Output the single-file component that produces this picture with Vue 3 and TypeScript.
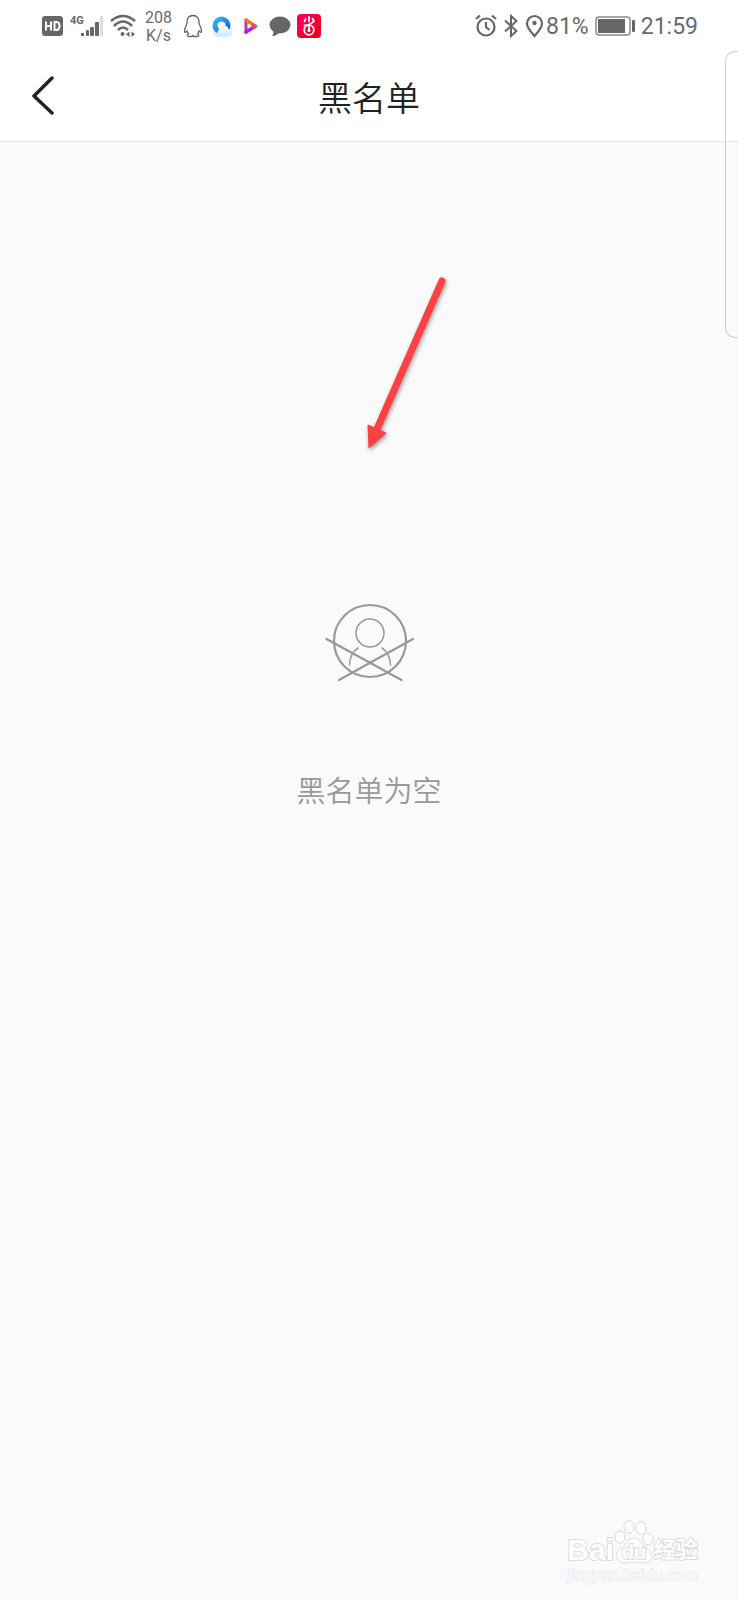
<script setup lang="ts">
import { ref } from 'vue'

const title = ref('黑名单')
const emptyText = ref('黑名单为空')
const battery = ref(81)
const time = ref('21:59')
</script>

<template>
  <div class="screen">
    <div class="status">
      <div class="group">
        <svg width="22" height="22" viewBox="0 0 22 22">
          <rect x="0" y="1" width="21" height="20" rx="3" fill="#666" />
          <path d="M4 6.500V15.500M9 6.500V15.500M4 11H9M12.500 7V15H14C16.500 15 17.500 13.500 17.500 11S16.500 7 14 7Z" fill="none" stroke="#fff" stroke-width="2" />
        </svg>
        <div class="signal">
          <span class="net">4G</span>
          <svg width="23" height="22" viewBox="0 0 23 22">
            <g fill="#666">
              <rect x="0" y="18" width="3" height="3" />
              <rect x="5" y="15" width="3" height="6" rx="1" />
              <rect x="9" y="12" width="4" height="9" rx="1" />
              <rect x="14" y="7" width="4" height="14" rx="1" />
            </g>
            <rect x="19" y="1" width="3" height="20" rx="1" fill="#ddd" />
          </svg>
        </div>
        <svg width="26" height="24" viewBox="0 0 26 24">
          <g fill="none" stroke="#666" stroke-width="2.500">
            <path d="M1 7Q13-3 25 7" />
            <path d="M4 12Q13 3 22 12" />
            <path d="M8 16Q13 11 18 16" />
          </g>
          <circle cx="12.500" cy="20" r="2" fill="#666" />
          <path d="M19.500 17.500V23L16 20.200ZM21.500 17.500V23L25 20.200Z" fill="#666" />
        </svg>
        <div class="speed"><span>208</span><span>K/s</span></div>
        <svg width="24" height="24" viewBox="0 0 24 24">
          <path d="M12 1.500C7.500 1.500 6 5 6 8.500C6 11 3.500 13.500 3.500 17C3.500 19 4.500 18.500 6 17C6 18.500 7 19.500 7.500 20C5.500 21 6 22.500 8 22.500H11L12 21.500L13 22.500H16C18 22.500 18.500 21 16.500 20C17 19.500 18 18.500 18 17C19.500 18.500 20.500 19 20.500 17C20.500 13.500 18 11 18 8.500C18 5 16.500 1.500 12 1.500Z" fill="none" stroke="#666" stroke-width="1.300" />
        </svg>
        <svg width="22" height="24" viewBox="1 0 22 24">
          <defs>
            <linearGradient id="sky" x1="0" y1="0" x2="1" y2="1">
              <stop offset="0" stop-color="#35b5f5" />
              <stop offset="1" stop-color="#1463dc" />
            </linearGradient>
            <linearGradient id="cloud" x1="0" y1="0" x2="0" y2="1">
              <stop offset="0" stop-color="#fff" />
              <stop offset="1" stop-color="#d3e9fa" />
            </linearGradient>
          </defs>
          <rect x="2" y="9" width="21" height="14" rx="7" fill="url(#cloud)" />
          <circle cx="11.500" cy="11.500" r="6.500" fill="none" stroke="url(#sky)" stroke-width="5" />
          <path d="M7 22C7 17 9 14 12 14.500C13 11 18 11 18.500 15C22 15 23 19 21 22Z" fill="url(#cloud)" />
        </svg>
        <svg width="24" height="24" viewBox="0 0 24 24">
          <path d="M7 6V18" stroke="#d522c8" stroke-width="3" stroke-linecap="round" />
          <path d="M7 6L16 12" stroke="#f57825" stroke-width="3.500" stroke-linecap="round" />
          <path d="M7 18L16 12.500" stroke="#9e22e0" stroke-width="3.500" stroke-linecap="round" />
          <path d="M13 10.500L16 12L13 14" fill="none" stroke="#f04468" stroke-width="3" />
          <path d="M8.500 10.500L11 12L8.500 13.500Z" fill="#fff" />
        </svg>
        <svg width="22" height="22" viewBox="0 0 22 22">
          <ellipse cx="11" cy="10" rx="10.500" ry="8.500" fill="#666" />
          <path d="M4 15C5 18 4 20 3 21C7 21 9 19 11 17Z" fill="#666" />
        </svg>
        <svg width="24" height="24" viewBox="0 0 24 24">
          <defs>
            <linearGradient id="rose" x1="0" y1="0" x2="1" y2="1">
              <stop offset="0" stop-color="#f90066" />
              <stop offset="1" stop-color="#e80010" />
            </linearGradient>
          </defs>
          <rect width="24" height="24" rx="4" fill="url(#rose)" />
          <g fill="none" stroke="#fff" stroke-width="1.800" stroke-linecap="round">
            <path d="M12 3V7M8.500 5L7.500 7.500M15.500 4.500L17 7M16.500 7.500C14 10.500 11 11 7.500 11.500" />
            <circle cx="12" cy="16" r="4.800" />
            <path d="M12 13V17" />
          </g>
          <circle cx="12" cy="16.500" r="1.500" fill="#fff" />
        </svg>
      </div>
      <div class="group">
        <svg width="22" height="24" viewBox="0 0 22 24" fill="none" stroke="#666" stroke-width="2.200">
          <circle cx="11" cy="13" r="8.500" />
          <path d="M11 8V13L14.500 16M1 5L5 1.500M21 5L17 1.500" />
        </svg>
        <svg width="16" height="24" viewBox="0 0 16 24">
          <path d="M2 6.500L13.500 17L8 22V2L13.500 7L2 17.500" fill="none" stroke="#666" stroke-width="2" />
        </svg>
        <div class="percent">
          <svg width="19" height="24" viewBox="0 0 19 24">
            <path d="M9.500 22C6 18 2 14 2 9.500A7.500 7.500 0 0 1 17 9.500C17 14 13 18 9.500 22Z" fill="none" stroke="#666" stroke-width="2.200" />
            <circle cx="9.500" cy="9" r="2.200" fill="#666" />
          </svg>
          <span class="figure">{{ battery }}%</span>
        </div>
        <svg width="40" height="22" viewBox="0 0 40 22">
          <rect x="1" y="2" width="34" height="18" rx="3" fill="#fff" stroke="#8a8a8a" stroke-width="1.500" />
          <rect x="3" y="4" width="27" height="14" fill="#666" />
          <rect x="37" y="5" width="3" height="12" rx="1" fill="#666" />
        </svg>
        <span class="figure">{{ time }}</span>
      </div>
    </div>

    <header class="header">
      <button class="back" type="button" aria-label="返回">
        <svg width="24" height="40" viewBox="0 0 24 40">
          <path d="M20 2L2 20L20 37" fill="none" stroke="#222" stroke-width="3.500" stroke-linecap="round" stroke-linejoin="round" />
        </svg>
      </button>
      <h1>{{ title }}</h1>
    </header>

    <main class="empty">
      <svg width="90" height="80" viewBox="-1 -1 90 80" fill="none" stroke="#999" stroke-linecap="round">
        <circle cx="45" cy="38" r="36" stroke-width="2.200" />
        <circle cx="45" cy="30" r="14" stroke-width="1.500" />
        <path d="M33 45Q25 50 24.500 62M57 45Q65 50 65.500 62" stroke-width="1.500" />
        <path d="M1.500 36L76.500 77M88 36L14 77" stroke-width="2.200" />
      </svg>
      <p>{{ emptyText }}</p>
    </main>

    <div class="edge"></div>

    <svg class="arrow" width="90" height="184" viewBox="0 0 90 184">
      <path d="M79 9L14 157" stroke="#fb4144" stroke-width="7" stroke-linecap="round" />
      <path d="M5 153L23 161L6 176Z" fill="#fb4144" stroke="#fb4144" stroke-linejoin="round" />
    </svg>

    <div class="mark">
      <div class="brand">
        <span>Bai</span>
        <span class="paw">
          <svg width="40" height="44" viewBox="0 0 40 44" fill="#fff" stroke="#d8d8d8">
            <ellipse cx="6" cy="17" rx="5" ry="6" />
            <ellipse cx="15" cy="7" rx="5" ry="6.500" />
            <ellipse cx="27" cy="8" rx="5" ry="6.500" />
            <ellipse cx="34" cy="19" rx="5" ry="6" />
            <path d="M20 18C14 18 13 24 8 28C0 32 0 42 10 43C15 43 16 42 20 42S27 43 31 43C41 41 39 32 32 28C27 24 26 18 20 18Z" />
          </svg>
          <b>du</b>
        </span>
        <span class="cn">经验</span>
      </div>
      <div class="site">jingyan.baidu.com</div>
    </div>
  </div>
</template>

<style>
body {
  margin: 0;
}
</style>

<style scoped>
.screen {
  position: relative;
  min-height: 100vh;
  background: #fafafa;
  font-family: Roboto, "Noto Sans CJK SC", sans-serif;
  overflow: hidden;
}
.status {
  display: flex;
  justify-content: space-between;
  align-items: center;
  height: 52px;
  padding: 0 40px 0 42px;
  background: #fff;
  color: #6a6a6a;
  font-size: 23px;
  line-height: 28px;
}
.group,
.percent,
.signal {
  display: flex;
  align-items: center;
}
.group {
  gap: 6px;
}
.percent {
  gap: 2px;
}
.figure {
  padding-top: 2px;
}
svg {
  display: block;
  flex: none;
}
.net {
  width: 11px;
  align-self: flex-start;
  font: bold 11px/11px Roboto, sans-serif;
}
.speed {
  display: flex;
  flex-direction: column;
  align-items: center;
  width: 33px;
  padding-top: 1px;
  font-size: 16px;
  line-height: 18px;
}
.header {
  display: flex;
  align-items: center;
  justify-content: center;
  position: relative;
  height: 89px;
  background: #fff;
  border-bottom: 1px solid #e2e2e2;
}
.back {
  position: absolute;
  left: 20px;
  top: 14px;
  padding: 10px 12px;
  border: 0;
  background: none;
}
h1 {
  margin: 0;
  color: #222;
  font-family: "Noto Sans CJK SC", sans-serif;
  font-size: 34px;
  line-height: 50px;
  font-weight: 350;
}
.empty {
  display: flex;
  flex-direction: column;
  align-items: center;
  gap: 86px;
  padding-top: 460px;
}
.empty p {
  margin: 0;
  color: #999;
  font-family: "Noto Sans CJK SC", sans-serif;
  font-size: 29px;
  line-height: 42px;
  font-weight: 350;
}
.edge {
  position: absolute;
  top: 51px;
  right: -1px;
  width: 13px;
  height: 285px;
  border: 1px solid #ccc;
  border-right: 0;
  border-radius: 10px 0 0 10px;
}
.arrow {
  position: absolute;
  top: 272px;
  left: calc(50% - 6px);
  fill: none;
  filter: drop-shadow(1px 2px 2px rgba(0, 0, 0, 0.4));
}
.mark {
  position: absolute;
  right: 40px;
  bottom: 16px;
  color: #fff;
  -webkit-text-stroke: 2px #dcdcdc;
  paint-order: stroke fill;
}
.brand {
  display: flex;
  align-items: flex-end;
  font: bold 30px/28px "Liberation Sans", "Noto Sans CJK SC", sans-serif;
}
.paw {
  position: relative;
}
.paw svg {
  paint-order: normal;
}
.paw b {
  position: absolute;
  left: 0;
  right: 0;
  bottom: -2px;
  text-align: center;
  font-size: 20px;
}
.cn {
  font-size: 22px;
}
.site {
  font: 15px/20px "Noto Sans", sans-serif;
  color: #fff;
  -webkit-text-stroke: 1px #dedede;
}
</style>
